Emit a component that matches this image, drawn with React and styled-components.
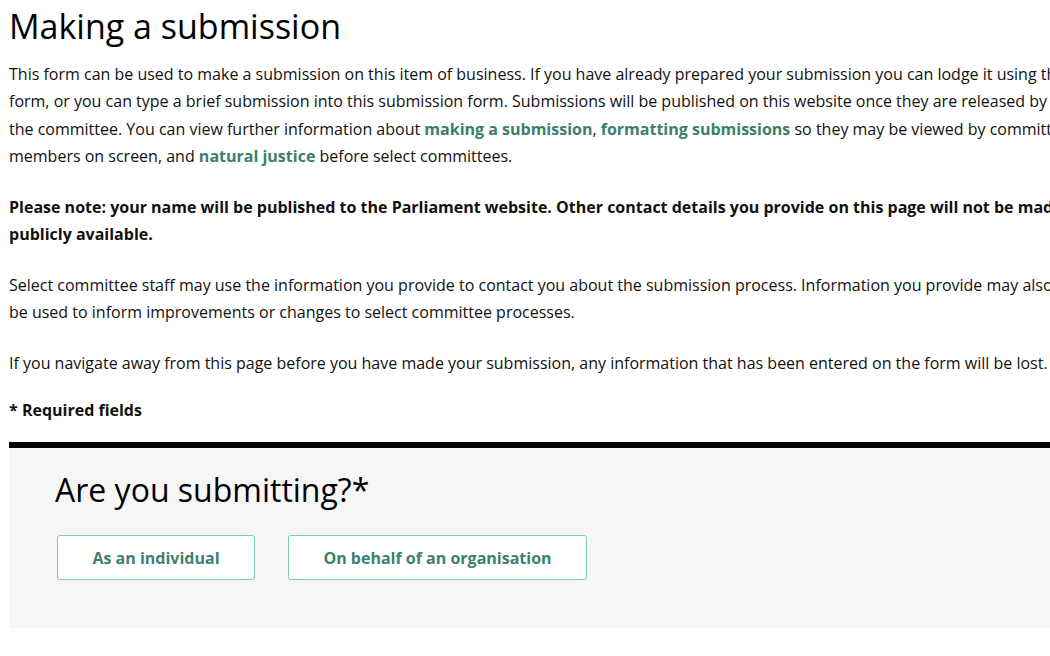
import React, { useState } from "react";
import styled, { createGlobalStyle } from "styled-components";

const GlobalStyle = createGlobalStyle`
  html, body {
    margin: 0;
    padding: 0;
    background: #fff;
    overflow: hidden;
  }
  body {
    font-family: "Open Sans", "Noto Sans", "Liberation Sans", sans-serif;
    color: #111;
  }
`;

const Page = styled.main`
  width: 1064px;
  padding: 6px 0 0 9px;
`;

const Title = styled.h1`
  font-size: 34px;
  font-weight: 400;
  line-height: 40px;
  margin: 0 0 15px;
  color: #000;
`;

const Para = styled.p`
  font-size: 16px;
  line-height: 27.3px;
  margin: 0 0 ${({ gap }) => (gap ?? 23.5)}px;
  font-weight: ${({ strong }) => (strong ? 700 : 400)};
  color: #111;
`;

const Link = styled.a`
  color: #3a806d;
  font-weight: 700;
  text-decoration: none;
`;

const Panel = styled.section`
  margin-top: 18px;
  border-top: 6px solid #000;
  background: #f6f6f6;
  padding: 22px 46px 48px;
  min-height: 179px;
  box-sizing: border-box;
`;

const Question = styled.h2`
  font-size: 32px;
  font-weight: 400;
  line-height: 40px;
  margin: 0 0 25px;
  color: #000;
`;

const Choices = styled.div`
  display: flex;
  gap: 33px;
  padding-left: 2px;
`;

const Choice = styled.button`
  width: ${({ w }) => w}px;
  height: 45px;
  background: ${({ active }) => (active ? "#eaf7f2" : "#fff")};
  border: 1.5px solid #76d0b0;
  border-radius: 3px;
  font-family: "Open Sans", "Noto Sans", sans-serif;
  font-size: 16px;
  font-weight: 700;
  color: #3d7f70;
  cursor: pointer;
  padding: 0;
`;

export default function App() {
  const [kind, setKind] = useState(null);

  return (
    <Page>
      <GlobalStyle />
      <Title>Making a submission</Title>
      <Para>
        This form can be used to make a submission on this item of business. If you have
        already prepared your submission you can lodge it using this form, or you can type a
        brief submission into this submission form. Submissions will be published on this
        website once they are released by the committee. You can view further information
        about <Link href="#">making a submission</Link>,{" "}
        <Link href="#">formatting submissions</Link> so they may be viewed by committee
        members on screen, and <Link href="#">natural justice</Link> before select committees.
      </Para>
      <Para strong>
        Please note: your name will be published to the Parliament website. Other contact
        details you provide on this page will not be made publicly available.
      </Para>
      <Para>
        Select committee staff may use the information you provide to contact you about the
        submission process. Information you provide may also be used to inform improvements or
        changes to select committee processes.
      </Para>
      <Para gap={20}>
        If you navigate away from this page before you have made your submission, any
        information that has been entered on the form will be lost.
      </Para>
      <Para strong gap={0}>* Required fields</Para>
      <Panel>
        <Question>Are you submitting?*</Question>
        <Choices>
          <Choice w={198} active={kind === "individual"} onClick={() => setKind("individual")}>
            As an individual
          </Choice>
          <Choice w={299} active={kind === "org"} onClick={() => setKind("org")}>
            On behalf of an organisation
          </Choice>
        </Choices>
      </Panel>
    </Page>
  );
}
